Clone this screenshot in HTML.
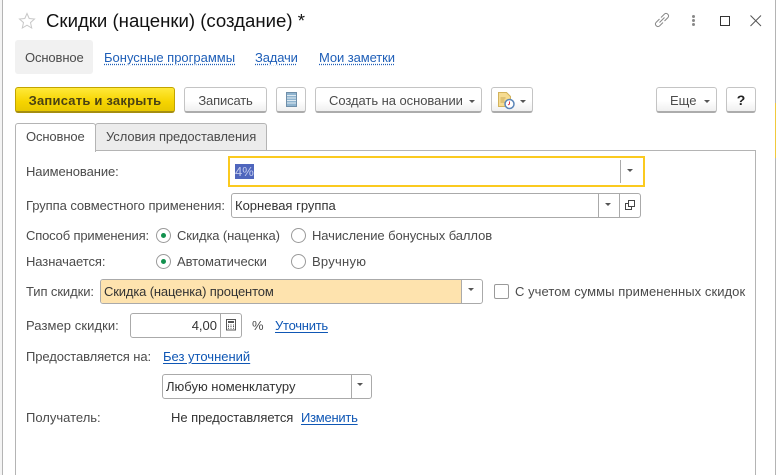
<!DOCTYPE html>
<html><head><meta charset="utf-8">
<style>
html,body{margin:0;padding:0;background:#fff;overflow:hidden;width:777px;height:475px;}
#w{position:absolute;left:0;top:0;width:777px;height:475px;overflow:hidden;font-family:"Liberation Sans",sans-serif;font-size:13px;color:#4b4b4b;}
.a{position:absolute;box-sizing:border-box;}
.t{position:absolute;white-space:nowrap;line-height:16px;}
.l{color:#0f57b5;text-decoration:underline;text-underline-offset:2px;}
.n{color:#1f5fb8;text-decoration:underline dotted;text-underline-offset:2px;}
.b{position:absolute;box-sizing:border-box;top:87px;height:26px;background:linear-gradient(#fff,#fff 55%,#f0f0f0);border:1px solid #c4c4c4;border-bottom:2px solid #acacac;border-radius:3px;text-align:center;line-height:25px;color:#4b4b4b;white-space:nowrap;}
.f{position:absolute;box-sizing:border-box;background:#fff;border:1px solid #aaa;border-radius:3px;}
.d{position:absolute;top:0;bottom:0;width:1px;background:#aaa;}
.ar{position:absolute;width:0;height:0;border-left:3px solid transparent;border-right:3px solid transparent;border-top:3.5px solid #555;}
.r{position:absolute;box-sizing:border-box;width:15px;height:15px;border:1px solid #9a9a9a;border-radius:50%;background:#fff;}
.r i{position:absolute;left:4px;top:4px;width:5px;height:5px;border-radius:50%;background:#12914e;}
</style></head><body><div id="w">
<div class="a" style="left:0;top:0;width:2px;height:475px;background:#f4f4f4"></div>
<div class="a" style="left:2px;top:0;width:1px;height:475px;background:#b4b4b4"></div>
<div class="a" style="left:775px;top:0;width:1px;height:475px;background:#b4b4b4"></div>
<div class="a" style="left:775px;top:103px;width:1px;height:55px;background:#f0c93c"></div>

<svg class="a" style="left:18px;top:12px" width="18" height="18" viewBox="0 0 18 18"><path d="M9 1.500l2.200 5 5.300.5-4 3.600 1.200 5.400L9 13.200 4.300 16l1.200-5.400-4-3.600 5.300-.5z" fill="#fff" stroke="#c8c8c8" stroke-width="1"/></svg>
<div class="t" style="left:46px;top:10px;font-size:18.6px;line-height:22px;color:#111">Скидки (наценки) (создание) *</div>

<svg class="a" style="left:653px;top:11px" width="18" height="18" viewBox="0 0 18 18" fill="none" stroke="#888" stroke-width="1"><path d="M6.500 11.500l5-5M6.500 8l-3.500 3.500a2.500 2.500 0 0 0 3.500 3.500L10 11.500M8 6.500l3.500-3.500a2.500 2.500 0 0 1 3.500 3.500L11.500 10"/></svg>
<div class="a" style="left:692px;top:15px;width:3px;height:3px;background:#888;border-radius:50%"></div>
<div class="a" style="left:692px;top:19px;width:3px;height:3px;background:#888;border-radius:50%"></div>
<div class="a" style="left:692px;top:23px;width:3px;height:3px;background:#888;border-radius:50%"></div>
<div class="a" style="left:720px;top:16px;width:10px;height:10px;border:1.500px solid #333"></div>
<svg class="a" style="left:750px;top:15px" width="12" height="12" viewBox="0 0 12 12"><path d="M.5.500l10.500 10.500M11 .5L.500 11" stroke="#555" stroke-width="1" fill="none"/></svg>

<div class="a" style="left:15px;top:40px;width:78px;height:34px;background:#f1f1f1;border-radius:3px"></div>
<div class="t" style="left:25px;top:50px;letter-spacing:-.12px">Основное</div>
<div class="t n" style="left:104px;top:50px">Бонусные программы</div>
<div class="t n" style="left:255px;top:50px;letter-spacing:-.16px">Задачи</div>
<div class="t n" style="left:319px;top:50px;letter-spacing:-.09px">Мои заметки</div>

<div class="b" style="left:15px;width:160px;background:linear-gradient(#ffe93a,#f6d400 60%,#e8c800);border-color:#c2a400;border-bottom-color:#a58e10;font-weight:bold;color:#4a4214;letter-spacing:.22px">Записать и закрыть</div>
<div class="b" style="left:184px;width:83px;letter-spacing:-.15px">Записать</div>
<div class="b" style="left:276px;width:30px"></div>
<svg class="a" style="left:285px;top:92px" width="12" height="16" viewBox="0 0 12 16"><rect x="1.500" y=".5" width="10" height="14" fill="#8fb4cf" stroke="#6f8ea8"/><path d="M2 3.500h9M2 6h9M2 8.500h9M2 11h9" stroke="#dfeaf2" stroke-width="1"/></svg>
<div class="b" style="left:315px;width:167px;text-align:left;padding-left:13px;letter-spacing:-.05px">Создать на основании</div>
<div class="ar" style="left:469px;top:100px"></div>
<div class="b" style="left:491px;width:42px"></div>
<svg class="a" style="left:498px;top:92px" width="18" height="18" viewBox="0 0 18 18"><path d="M.5.500h8l4 4v10H.5z" fill="#f6dc92" stroke="#d3b35c"/><path d="M2.500 6h5M2.500 8h4M2.500 10h4" stroke="#c9a755" stroke-width="1"/><circle cx="11.500" cy="12" r="4.500" fill="#fff" stroke="#5b86b8" stroke-width="1.500"/><path d="M11.500 9.500V12l-1.500 1" stroke="#d34" fill="none"/></svg>
<div class="ar" style="left:520px;top:100px"></div>
<div class="b" style="left:656px;width:61px;text-align:left;padding-left:13px">Еще</div>
<div class="ar" style="left:704px;top:100px"></div>
<div class="b" style="left:726px;width:30px;font-weight:bold;font-size:14px;color:#222">?</div>

<div class="a" style="left:15px;top:150px;width:741px;height:340px;border:1px solid #b4b4b4"></div>
<div class="a" style="left:95px;top:123px;width:172px;height:28px;background:#ececec;border:1px solid #b4b4b4;border-radius:3px 3px 0 0"></div>
<div class="a" style="left:15px;top:123px;width:81px;height:29px;background:#fff;border:1px solid #b4b4b4;border-bottom:none;border-radius:3px 3px 0 0"></div>
<div class="t" style="left:26px;top:129px;letter-spacing:-.12px">Основное</div>
<div class="t" style="left:106px;top:129px;letter-spacing:-.09px">Условия предоставления</div>

<div class="t" style="left:26px;top:164px;letter-spacing:-.08px">Наименование:</div>
<div class="a" style="left:228px;top:156px;width:417px;height:31px;border:2px solid #fbca1f;background:#fff"></div>
<div class="a" style="left:235px;top:164px;width:19px;height:15px;background:#4f66bd"></div>
<div class="t" style="left:235px;top:164px;color:#c3cbec">4%</div>
<div class="a" style="left:620px;top:160px;width:1px;height:23px;background:#aaa"></div>
<div class="ar" style="left:627px;top:169px"></div>

<div class="t" style="left:26px;top:198px;letter-spacing:-.07px">Группа совместного применения:</div>
<div class="f" style="left:231px;top:193px;width:410px;height:25px"><div class="d" style="left:366px"></div><div class="d" style="left:387px"></div></div>
<div class="t" style="left:235px;top:198px;color:#333">Корневая группа</div>
<div class="ar" style="left:605px;top:203px"></div>
<svg class="a" style="left:625px;top:200px" width="11" height="11" viewBox="0 0 11 11" fill="none" stroke="#444"><rect x="3.500" y=".5" width="6" height="6"/><path d="M3.500 3.500H.5v6h6v-3"/></svg>

<div class="t" style="left:26px;top:228px;letter-spacing:-.16px">Способ применения:</div>
<div class="r" style="left:156px;top:228px"><i></i></div>
<div class="t" style="left:177px;top:228px;letter-spacing:-.12px">Скидка (наценка)</div>
<div class="r" style="left:291px;top:228px"></div>
<div class="t" style="left:312px;top:228px;letter-spacing:-.08px">Начисление бонусных баллов</div>

<div class="t" style="left:26px;top:254px;letter-spacing:-.08px">Назначается:</div>
<div class="r" style="left:156px;top:254px"><i></i></div>
<div class="t" style="left:177px;top:254px;letter-spacing:-.08px">Автоматически</div>
<div class="r" style="left:291px;top:254px"></div>
<div class="t" style="left:312px;top:254px;letter-spacing:.25px">Вручную</div>

<div class="t" style="left:26px;top:284px;letter-spacing:-.09px">Тип скидки:</div>
<div class="f" style="left:100px;top:279px;width:383px;height:25px;overflow:hidden"><div class="a" style="left:0;top:0;bottom:0;width:361px;background:#fee3ae;border-right:1px solid #aaa"></div></div>
<div class="t" style="left:104px;top:284px;color:#333;letter-spacing:-.15px">Скидка (наценка) процентом</div>
<div class="ar" style="left:468px;top:288px"></div>
<div class="a" style="left:494px;top:284px;width:15px;height:15px;border:1px solid #9a9a9a;border-radius:2px;background:#fff"></div>
<div class="t" style="left:515px;top:284px;letter-spacing:.06px">С учетом суммы примененных скидок</div>

<div class="t" style="left:26px;top:318px;letter-spacing:.07px">Размер скидки:</div>
<div class="f" style="left:130px;top:313px;width:112px;height:25px"><div class="d" style="left:89px"></div></div>
<div class="t" style="left:170px;top:318px;width:47px;text-align:right;color:#333">4,00</div>
<svg class="a" style="left:226px;top:319px" width="11" height="12" viewBox="0 0 11 12"><rect x=".5" y=".5" width="9" height="10.500" fill="#fff" stroke="#555"/><rect x="2" y="2" width="6" height="2" fill="#555"/><path d="M2 6h1M4.500 6h1M7 6h1M2 7.500h1M4.500 7.500h1M7 7.500h1M2 9.300h1M4.500 9.300h1M7 9.300h1" stroke="#555"/></svg>
<div class="t" style="left:252px;top:318px">%</div>
<div class="t l" style="left:275px;top:318px;letter-spacing:-.25px">Уточнить</div>

<div class="t" style="left:26px;top:349px;letter-spacing:-.1px">Предоставляется на:</div>
<div class="t l" style="left:163px;top:349px">Без уточнений</div>

<div class="f" style="left:162px;top:374px;width:210px;height:25px"><div class="d" style="left:188px"></div></div>
<div class="t" style="left:166px;top:379px;color:#333">Любую номенклатуру</div>
<div class="ar" style="left:357px;top:383px"></div>

<div class="t" style="left:26px;top:410px">Получатель:</div>
<div class="t" style="left:171px;top:410px;color:#333;letter-spacing:-.05px">Не предоставляется</div>
<div class="t l" style="left:301px;top:410px;letter-spacing:-.25px">Изменить</div>
</div></body></html>
